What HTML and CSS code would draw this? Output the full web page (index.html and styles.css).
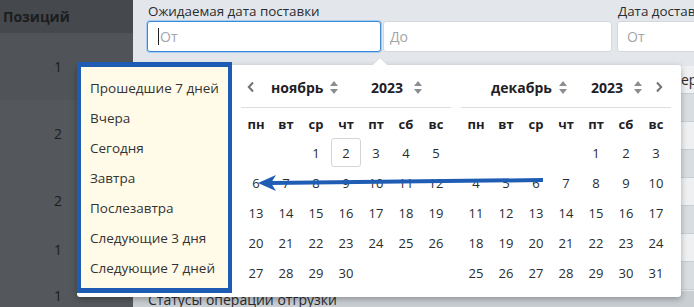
FILE: index.html
```html
<!DOCTYPE html>
<html lang="ru">
<head>
  <meta charset="UTF-8">
  <link rel="stylesheet" href="styles.css">
  <title>Отгрузки</title>
</head>
<body>
  <div class="page">
    <aside class="side">
      <div class="side-cell side-head">Позиций</div>
      <div class="side-cell row-a">1</div>
      <div class="side-cell row-b">2</div>
      <div class="side-cell row-c">2</div>
      <div class="side-cell row-d">1</div>
      <div class="side-cell row-e">1</div>
    </aside>

    <main class="main">
      <div class="filters">
        <div class="field">
          <div class="label">Ожидаемая дата поставки</div>
          <div class="range">
            <div class="inp from focus"><span class="caret"></span>От</div>
            <div class="inp to">До</div>
          </div>
        </div>
        <div class="field">
          <div class="label">Дата доставки</div>
          <div class="range">
            <div class="inp from">От</div>
            <div class="inp to">До</div>
          </div>
        </div>
      </div>

      <div class="table">
        <div class="trow light">Номер</div>
        <div class="trow gray"></div>
        <div class="trow light"></div>
        <div class="trow gray"></div>
        <div class="trow light"></div>
        <div class="trow gray"></div>
        <div class="trow light"></div>
        <div class="trow gray"></div>
      </div>
      <div class="section">Статусы операции отгрузки</div>
    </main>
  </div>

  <!-- date range picker -->
  <div class="picker">
    <ul class="ranges">
      <li>Прошедшие 7 дней</li>
      <li>Вчера</li>
      <li>Сегодня</li>
      <li>Завтра</li>
      <li>Послезавтра</li>
      <li>Следующие 3 дня</li>
      <li>Следующие 7 дней</li>
    </ul>

    <div class="cal">
      <div class="cal-head">
        <span class="nav"><svg width="8" height="12" viewBox="0 0 8 12"><path d="M6 1.5 1.8 6 6 10.5" fill="none" stroke="#707478" stroke-width="2"/></svg></span>
        <span class="month">ноябрь <svg class="sort" width="8" height="13" viewBox="0 0 8 13"><path d="M4 0 8 5H0zM4 13 0 8h8z" fill="#8a8e92"/></svg></span>
        <span class="year">2023 <svg class="sort" width="8" height="13" viewBox="0 0 8 13"><path d="M4 0 8 5H0zM4 13 0 8h8z" fill="#8a8e92"/></svg></span>
      </div>
      <div class="days week">
        <span>пн</span><span>вт</span><span>ср</span><span>чт</span><span>пт</span><span>сб</span><span>вс</span>
      </div>
      <div class="days" id="nov"></div>
    </div>

    <div class="cal">
      <div class="cal-head">
        <span class="nav"></span>
        <span class="month">декабрь <svg class="sort" width="8" height="13" viewBox="0 0 8 13"><path d="M4 0 8 5H0zM4 13 0 8h8z" fill="#8a8e92"/></svg></span>
        <span class="year">2023 <svg class="sort" width="8" height="13" viewBox="0 0 8 13"><path d="M4 0 8 5H0zM4 13 0 8h8z" fill="#8a8e92"/></svg></span>
        <span class="nav next"><svg width="8" height="12" viewBox="0 0 8 12"><path d="M2 1.5 6.2 6 2 10.5" fill="none" stroke="#707478" stroke-width="2"/></svg></span>
      </div>
      <div class="days week">
        <span>пн</span><span>вт</span><span>ср</span><span>чт</span><span>пт</span><span>сб</span><span>вс</span>
      </div>
      <div class="days" id="dec"></div>
    </div>
  </div>

  <!-- annotation -->
  <div class="mark"></div>
  <svg class="arrow" width="694" height="307" viewBox="0 0 694 307">
    <line x1="270" y1="183" x2="543" y2="180" stroke="#1f5db4" stroke-width="4"/>
    <polygon points="258,183 276,175 271,183 276,191" fill="#1f5db4"/>
  </svg>

  <script>
    // fill a month grid, first = weekday offset (0 = monday)
    function fillMonth(id, first, count, today) {
      const box = document.getElementById(id);
      for (let i = 0; i < first; i++) {
        box.appendChild(document.createElement('span'));
      }
      for (let d = 1; d <= count; d++) {
        let cell = document.createElement('span');
        cell.innerText = d;
        if (d === today) cell.classList.add('today');
        box.appendChild(cell);
      }
    }

    fillMonth('nov', 2, 30, 2);
    fillMonth('dec', 4, 31, 0);
  </script>
</body>
</html>
```

FILE: styles.css
```css
body {
  margin: 0;
  width: 694px;
  height: 307px;
  overflow: hidden;
  font-family: "Open Sans", sans-serif;
  font-size: 13px;
  color: #2a2c2e;
  position: relative;
}

.page {
  display: flex;
  height: 307px;
  overflow: hidden;
}

.side {
  width: 133px;
  flex-shrink: 0;
  background: #54585c;
}

.side-cell {
  width: 70px;
  box-sizing: border-box;
  padding-right: 8px;
  display: flex;
  align-items: center;
  justify-content: flex-end;
  font-size: 14px;
  color: #1c1d1e;
}

.side-head {
  width: 133px;
  height: 33px;
  justify-content: flex-start;
  padding-left: 3px;
  font-weight: bold;
  background: #45494d;
}

.row-a { height: 67px; background: #505458; width: 133px; padding-right: 71px; }
.row-b { height: 66px; }
.row-c { height: 68px; }
.row-d { height: 31px; }
.row-e { height: 60px; }

.main {
  flex: 1;
  min-width: 0;
  background: #e3e7eb;
  display: flex;
  flex-direction: column;
}

.filters {
  display: flex;
  gap: 5px;
  padding: 2px 0 0 14px;
}

.field {
  flex-shrink: 0;
}

.label {
  font-size: 13.4px;
  height: 19px;
  line-height: 19px;
  padding-left: 1px;
  color: #2b2d30;
}

.range {
  display: flex;
  gap: 2px;
}

.inp {
  height: 31px;
  box-sizing: border-box;
  background: #fff;
  border: 1px solid #d3d8dd;
  border-radius: 3px;
  padding-left: 9px;
  display: flex;
  align-items: center;
  font-size: 14px;
  color: #a0a5aa;
}

.inp.from { width: 234px; }
.inp.to { width: 229px; padding-left: 6px; }

.inp.focus {
  border-color: #3a8ad6;
  box-shadow: 0 0 0 1px #a9cdf0;
  padding-left: 10px;
}

.caret {
  width: 1px;
  height: 17px;
  background: #222;
  margin-right: 1px;
}

.table {
  margin-top: 14px;
}

.trow {
  height: 27px;
  border-bottom: 1px solid #c9ced3;
  font-size: 14px;
  line-height: 27px;
  padding-left: 519px;
  white-space: nowrap;
}

.trow.light { background: #eef0f2; }
.trow.gray { background: #d8dde2; }

.section {
  background: #c9ced3;
  padding-left: 15px;
  font-size: 14px;
  line-height: 18px;
  margin-top: 1px;
  flex: 1;
}

/* picker */

.picker {
  position: absolute;
  left: 77px;
  top: 65px;
  width: 604px;
  height: 232px;
  background: #fff;
  border-radius: 3px;
  box-shadow: 0 2px 6px rgba(0, 0, 0, 0.3);
  display: flex;
  align-items: flex-start;
}

.picker::before {
  content: "";
  position: absolute;
  left: 295px;
  top: -8px;
  border-left: 8px solid transparent;
  border-right: 8px solid transparent;
  border-bottom: 8px solid #d5d9dd;
}

.picker::after {
  content: "";
  position: absolute;
  left: 296px;
  top: -7px;
  border-left: 7px solid transparent;
  border-right: 7px solid transparent;
  border-bottom: 7px solid #fff;
}

.ranges {
  list-style: none;
  margin: 0;
  width: 154px;
  height: 224px;
  box-sizing: border-box;
  padding: 8px 0 0 13px;
  background: #fffbe8;
  font-size: 13.5px;
  color: #333;
}

.ranges li {
  height: 30px;
  line-height: 30px;
  white-space: nowrap;
}

.cal {
  width: 210px;
  margin-left: 10px;
  padding-top: 7px;
}

.cal-head {
  display: flex;
  align-items: center;
  height: 30px;
  padding-bottom: 5px;
  border-bottom: 1px solid #dcdfe2;
  font-size: 14px;
  font-weight: bold;
  color: #1f2124;
}

.nav {
  width: 30px;
  box-sizing: border-box;
  padding-left: 6px;
  display: flex;
}

.nav.next {
  margin-left: auto;
  width: auto;
  padding: 0 8px 0 0;
}

.month {
  width: 100px;
  display: flex;
  align-items: center;
}

.month .sort { margin-left: 7px; }

.year {
  display: flex;
  align-items: center;
}

.year .sort { margin-left: 11px; }

.days {
  display: grid;
  grid-template-columns: repeat(7, 30px);
}

.days span {
  height: 30px;
  line-height: 30px;
  text-align: center;
  box-sizing: border-box;
}

.week {
  margin-top: 2px;
  font-weight: bold;
  color: #1f2124;
}

.week span {
  height: 28px;
  line-height: 28px;
}

.today {
  border: 1px solid #d2d5d8;
  border-radius: 3px;
  line-height: 28px !important;
  height: 29px !important;
}

/* annotation overlay */

.mark {
  position: absolute;
  left: 77px;
  top: 62px;
  width: 155px;
  height: 231px;
  box-sizing: border-box;
  border: 4px solid #1e5cb3;
  border-top-width: 5px;
  border-bottom-width: 5px;
}

.arrow {
  position: absolute;
  left: 0;
  top: 0;
}
```
